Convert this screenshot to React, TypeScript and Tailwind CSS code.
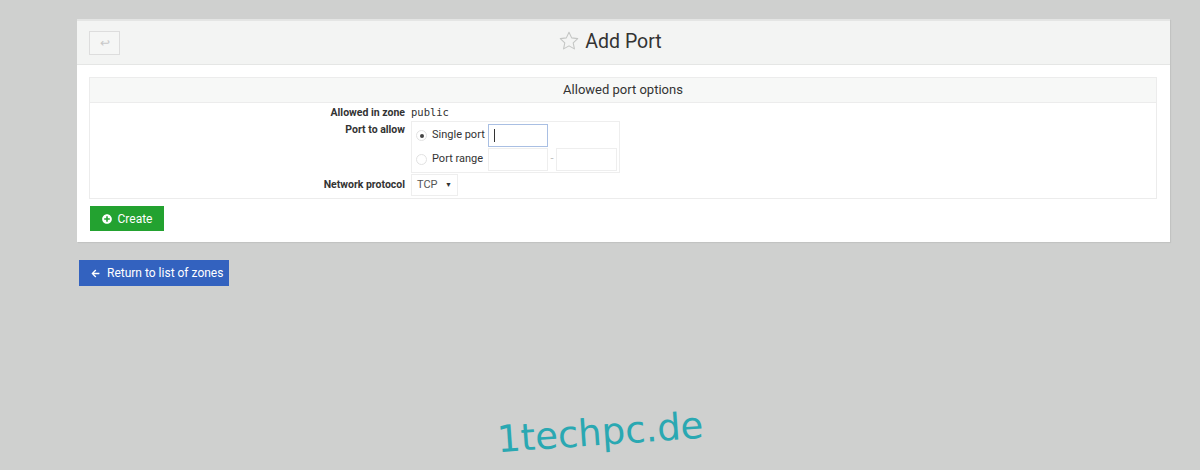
import { FaArrowLeft, FaPlusCircle } from 'react-icons/fa';

function Star() {
  return (
    <svg width="22" height="22" viewBox="0 0 24 24" fill="none" stroke="#c4c6c4" strokeWidth="1.2" strokeLinejoin="round">
      <path d="M12 2.5l2.9 6.1 6.6.8-4.9 4.6 1.3 6.6L12 17.3l-5.9 3.3 1.3-6.6-4.9-4.6 6.6-.8z" />
    </svg>
  );
}

function Radio({ checked }: { checked?: boolean }) {
  return (
    <span className="w-[11px] h-[11px] rounded-full border border-[#e2e2e2] bg-white flex items-center justify-center">
      {checked && <span className="w-[4px] h-[4px] rounded-full bg-[#444]" />}
    </span>
  );
}

export default function App() {
  return (
    <div className="relative min-h-[470px] bg-[#cfd0cf] pt-[19px] overflow-hidden" style={{ fontFamily: 'Roboto, "Liberation Sans", sans-serif' }}>
      <div className="ml-[77px] w-[1093px] bg-white border-t-2 border-[#e4e5e4] shadow-[1px_1px_1px_rgba(0,0,0,0.06)]">
        <div className="h-[44px] bg-[#f3f4f3] border-b border-[#e5e6e5] flex items-center px-3 relative">
          <button className="w-[31px] h-[24px] border border-[#dddddd] bg-[#f5f6f5] flex items-center justify-center text-[#c8c8c8] text-[12px]">↩</button>
          <div className="absolute inset-0 flex items-center justify-center pointer-events-none">
            <div className="relative text-[19.5px] text-[#333] leading-none -mt-[2px]">
              <span className="absolute right-full mr-[5px] top-[-2px]"><Star /></span>
              Add Port
            </div>
          </div>
        </div>
        <div className="pt-3 pl-3 pr-[13px] pb-[11px]">
          <div className="border border-[#ececec]">
            <div className="h-[25px] bg-[#f7f8f7] border-b border-[#ececec] flex items-center justify-center text-[13px] text-[#333]">
              Allowed port options
            </div>
            <div className="pt-[1px] pb-[2px] text-[11px] text-[#333]">
              <div className="flex items-center h-[17px]">
                <div className="w-[321px] text-right font-bold pr-[6px] text-[10.5px]">Allowed in zone</div>
                <div style={{ fontFamily: '"DejaVu Sans Mono", "Liberation Mono", monospace' }} className="text-[10.5px]">public</div>
              </div>
              <div className="flex">
                <div className="w-[321px] text-right font-bold pr-[6px] pt-[1px] text-[10.5px]">Port to allow</div>
                <div className="border border-[#eeeeee] w-[209px] h-[52px] py-[2px] flex flex-col gap-[1px]">
                  <div className="flex items-center h-[23px]">
                    <div className="w-[76px] flex items-center gap-[5px] pl-[4px]">
                      <Radio checked />
                      <span>Single port</span>
                    </div>
                    <div className="w-[60px] h-[23px] border border-[#a9bfe3] flex items-center pl-[5px]">
                      <span className="w-px h-[13px] bg-[#333]" />
                    </div>
                  </div>
                  <div className="flex items-center h-[23px]">
                    <div className="w-[76px] flex items-center gap-[5px] pl-[4px]">
                      <Radio />
                      <span>Port range</span>
                    </div>
                    <div className="w-[60px] h-[23px] border border-[#eeeeee]" />
                    <span className="w-[8px] text-center text-[#bbb]">-</span>
                    <div className="w-[61px] h-[23px] border border-[#eeeeee]" />
                  </div>
                </div>
              </div>
              <div className="flex items-center mt-[1px]">
                <div className="w-[321px] text-right font-bold pr-[6px] text-[10.5px]">Network protocol</div>
                <div className="w-[47px] h-[22px] border border-[#eeeeee] flex items-center justify-between pl-[5px] pr-[5px] text-[#555]">
                  <span>TCP</span>
                  <span className="text-[7px] text-[#333]">▼</span>
                </div>
              </div>
            </div>
          </div>
          <button className="mt-[7px] ml-px w-[74px] h-[25px] bg-[#23a230] text-white text-[12px] flex items-center justify-center gap-[6px]">
            <FaPlusCircle className="text-[10px]" />
            Create
          </button>
        </div>
      </div>
      <button className="mt-[18px] ml-[79px] w-[150px] h-[26px] bg-[#3362bf] text-white text-[12px] flex items-center gap-[7px] pl-[12px]">
        <FaArrowLeft className="text-[9px]" />
        Return to list of zones
      </button>
      <div
        className="absolute left-[497px] top-[414px] text-[37px] text-[#2aa8b2] -rotate-[4deg] leading-none"
        style={{ fontFamily: '"DejaVu Sans", sans-serif' }}
      >
        1techpc.de
      </div>
    </div>
  );
}
